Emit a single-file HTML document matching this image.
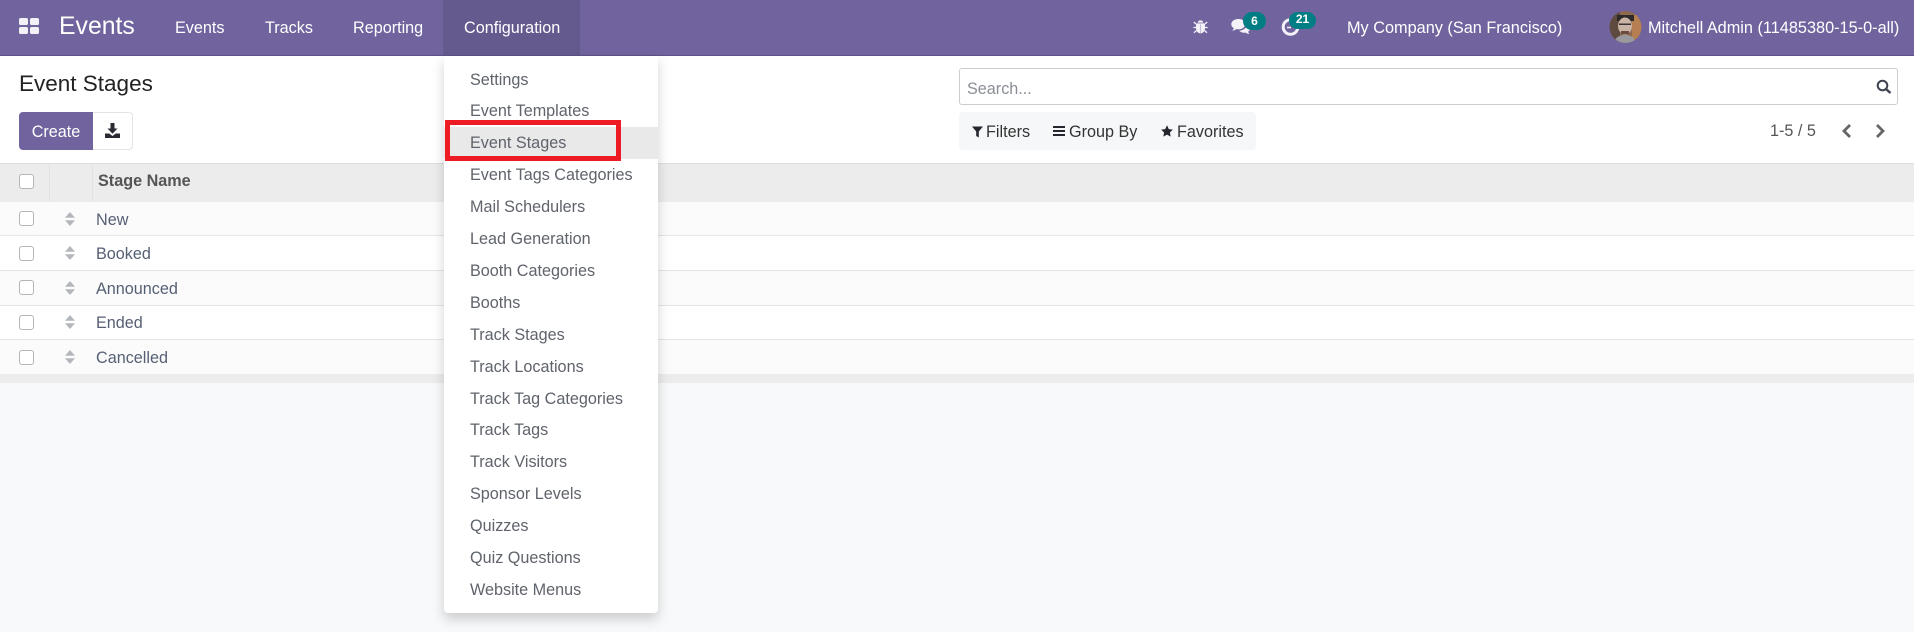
<!DOCTYPE html>
<html lang="en">
<head>
<meta charset="utf-8">
<title>Event Stages</title>
<style>
html,body{margin:0;padding:0;width:1914px;height:632px;overflow:hidden;background:#f8f9fa;font-family:"Liberation Sans",Arial,sans-serif;font-size:16.2px;color:#4c4c4c}
div,span,svg{position:absolute}
.t{white-space:nowrap;line-height:20px;height:20px}
.n{color:#fff;top:18px}
.cb{left:19px;width:13px;height:13px;background:#fff;border:1px solid #b5b5b5;border-radius:3px}
.row{left:0;width:1914px;border-bottom:1px solid #e6e6e6;box-sizing:border-box}
.m{left:470px;color:#5f636b}
.rt{left:96px;color:#566074}
.s{left:65px;width:10px;height:14px}
</style>
</head>
<body>
<!-- navbar -->
<div style="left:0;top:0;width:1914px;height:56px;background:#71639e;border-bottom:1px solid #5d5185;box-sizing:border-box"></div>
<div style="left:443px;top:0;width:137px;height:55px;background:#655a8e"></div>
<svg style="left:19px;top:18px" width="20" height="16" viewBox="0 0 20 16"><rect x="0" y="0" width="9" height="7" rx="1.8" fill="#f3f1f7"/><rect x="11" y="0" width="9" height="7" rx="1.8" fill="#f3f1f7"/><rect x="0" y="9" width="9" height="7" rx="1.8" fill="#f3f1f7"/><rect x="11" y="9" width="9" height="7" rx="1.8" fill="#f3f1f7"/></svg>
<div class="t" style="left:59px;top:17px;color:#fff;font-size:24.8px">Events</div>
<div class="t n" style="left:175px">Events</div>
<div class="t n" style="left:265px">Tracks</div>
<div class="t n" style="left:353px">Reporting</div>
<div class="t n" style="left:464px">Configuration</div>

<!-- bug -->
<svg style="left:1193px;top:19px" width="15" height="15" viewBox="0 0 15 15"><path d="M4.600 3.600a3 3 0 0 1 5.800 0z" fill="#f4f2f8"/><path d="M4 4.400h7c.6 0 1 .4 1 1V9c0 3-2 5.400-4.500 5.400S3 12 3 9V5.400c0-.6.4-1 1-1z" fill="#f4f2f8"/><path d="M3 5L.8 3M12 5l2.200-2M3 8.500H.4M12 8.500h2.600M3.500 11.500L1 13.700M11.500 11.500l2.500 2.200" stroke="#f4f2f8" stroke-width="1.300" fill="none"/><path d="M7.500 5.500v8.500" stroke="#b9b2d0" stroke-width=".9"/></svg>
<!-- chat -->
<svg style="left:1231px;top:18px" width="20" height="17" viewBox="0 0 20 17"><path d="M7.500 1C3.400 1 .3 3.300.3 6.200c0 1.700 1 3.100 2.500 4-.2.9-.8 1.700-1.500 2.500 1.500-.1 2.900-.7 4-1.600.6.100 1.200.2 1.800.2 4 0 7.100-2.300 7.100-5.100S11.500 1 7.500 1z" fill="#f4f2f8"/><path d="M15.800 6.500c0 3.300-3.300 6-7.600 6.200 1.200 1.300 3.100 2 5 2 .5 0 1 0 1.500-.1.900.8 2.200 1.300 3.800 1.400-.7-.7-1.200-1.400-1.400-2.200 1.200-.8 2-2 2-3.300 0-1.700-1.400-3.200-3.300-3.900z" fill="#f4f2f8"/></svg>
<div style="left:1243px;top:12px;width:23px;height:18px;background:#017e84;border-radius:9px;color:#fff;font-size:12px;font-weight:bold;line-height:18px;text-align:center">6</div>
<!-- clock -->
<svg style="left:1281px;top:18px" width="20" height="18" viewBox="0 0 20 18"><circle cx="9.500" cy="9" r="7.300" fill="none" stroke="#f4f2f8" stroke-width="3"/><path d="M6 9.500h4" stroke="#f4f2f8" stroke-width="1.500"/></svg>
<div style="left:1289px;top:12px;width:27px;height:17px;background:#017e84;border-radius:9px;color:#fff;font-size:12px;font-weight:bold;line-height:15px;text-align:center">21</div>

<div class="t n" style="left:1347px;font-size:16.3px">My Company (San Francisco)</div>
<!-- avatar -->
<svg style="left:1609px;top:11px" width="33" height="32" viewBox="0 0 33 32"><defs><clipPath id="c"><circle cx="16.500" cy="16" r="16"/></clipPath></defs><g clip-path="url(#c)"><rect width="33" height="32" fill="#8d6a4f"/><rect x="0" y="0" width="11" height="32" fill="#5e4a3f"/><rect x="23" y="4" width="10" height="24" fill="#b67f52"/><path d="M8 4h17v6H8z" fill="#2e2a2a"/><ellipse cx="16" cy="15" rx="7" ry="8.500" fill="#c9b3a4"/><path d="M10 12.500h12v1.500H10z" fill="#3b3535"/><path d="M12 20h8v3h-8z" fill="#6a4c40"/><path d="M5 32c1-6 6-8 11-8s10 2 11 8z" fill="#9a9a9e"/></g></svg>
<div class="t n" style="left:1648px;font-size:16.3px">Mitchell Admin (11485380-15-0-all)</div>

<!-- control panel -->
<div style="left:0;top:56px;width:1914px;height:107px;background:#fff"></div>
<div class="t" style="left:19px;top:74px;color:#222;font-size:22.5px;line-height:20px">Event Stages</div>
<div style="left:19px;top:112px;width:74px;height:38px;background:#71639e;border-radius:4px 0 0 4px;color:#fff;text-align:center;line-height:40px">Create</div>
<div style="left:93px;top:112px;width:40px;height:38px;background:#fff;border:1px solid #e4e4e4;border-left:0;border-radius:0 4px 4px 0;box-sizing:border-box"></div>
<svg style="left:105px;top:123px" width="15" height="15" viewBox="0 0 15 15"><path d="M5.500 0h4v5.500h3L7.500 10.700 2.500 5.500h3z" fill="#2b2b33"/><path d="M0 10.500h4.300l3.200 2.500 3.200-2.500H15V15H0z" fill="#2b2b33"/></svg>

<div style="left:959px;top:68px;width:939px;height:37px;background:#fff;border:1px solid #cdcdcd;border-radius:3px;box-sizing:border-box"></div>
<div class="t" style="left:967px;top:79px;color:#8a8e96">Search...</div>
<svg style="left:1876px;top:79px" width="16" height="15" viewBox="0 0 16 15"><circle cx="6.500" cy="6.500" r="4.800" fill="none" stroke="#3f4450" stroke-width="2"/><path d="M10 10l4.500 4" stroke="#3f4450" stroke-width="2.400"/></svg>

<div style="left:959px;top:112px;width:297px;height:38px;background:#f6f7f9;border-radius:4px"></div>
<svg style="left:972px;top:126px" width="11" height="12" viewBox="0 0 11 12"><path d="M0 .5h11L6.800 5.500V11.500L4.200 10V5.500z" fill="#26262e"/></svg>
<div class="t" style="left:986px;top:122px;color:#333">Filters</div>
<svg style="left:1053px;top:126px" width="12" height="10" viewBox="0 0 12 10"><path d="M0 0h12v2H0zM0 4h12v2H0zM0 8h12v2H0z" fill="#26262e"/></svg>
<div class="t" style="left:1069px;top:122px;color:#333">Group By</div>
<svg style="left:1161px;top:125px" width="12" height="12" viewBox="0 0 12 12"><path d="M6 .3l1.800 3.800 4.100.5-3 2.900.8 4.100L6 9.600 2.300 11.600l.8-4.100-3-2.900 4.100-.5z" fill="#26262e"/></svg>
<div class="t" style="left:1177px;top:122px;color:#333">Favorites</div>

<div class="t" style="left:1770px;top:121px;color:#555">1-5 / 5</div>
<svg style="left:1841px;top:124px" width="11" height="14" viewBox="0 0 11 14"><path d="M9 1L3 7l6 6" fill="none" stroke="#666" stroke-width="2.800"/></svg>
<svg style="left:1875px;top:124px" width="11" height="14" viewBox="0 0 11 14"><path d="M2 1l6 6-6 6" fill="none" stroke="#666" stroke-width="2.800"/></svg>

<!-- table -->
<div style="left:0;top:163px;width:1914px;height:39px;background:#ececec;border-top:1px solid #dedede;box-sizing:border-box"></div>
<div style="left:49px;top:164px;width:1px;height:37px;background:#e2e2e2"></div>
<div style="left:92px;top:164px;width:1px;height:37px;background:#e2e2e2"></div>
<div class="cb" style="top:174px"></div>
<div class="t" style="left:98px;top:171px;font-weight:bold;color:#555">Stage Name</div>

<div class="row" style="top:202px;height:34px;background:#fbfbfb"></div>
<div class="row" style="top:236px;height:35px;background:#fff"></div>
<div class="row" style="top:271px;height:35px;background:#fbfbfb"></div>
<div class="row" style="top:306px;height:34px;background:#fff"></div>
<div class="row" style="top:340px;height:34px;background:#fbfbfb;border-bottom:0"></div>
<div style="left:0;top:374px;width:1914px;height:9px;background:#ececec"></div>

<div class="cb" style="top:211px"></div>
<div class="cb" style="top:246px"></div>
<div class="cb" style="top:280px"></div>
<div class="cb" style="top:315px"></div>
<div class="cb" style="top:350px"></div>
<svg class="s" style="top:212px" viewBox="0 0 10 14"><path d="M5 0l5 5.800H0zM0 8.200h10L5 14z" fill="#b3b7bc"/></svg>
<svg class="s" style="top:246px" viewBox="0 0 10 14"><path d="M5 0l5 5.800H0zM0 8.200h10L5 14z" fill="#b3b7bc"/></svg>
<svg class="s" style="top:281px" viewBox="0 0 10 14"><path d="M5 0l5 5.800H0zM0 8.200h10L5 14z" fill="#b3b7bc"/></svg>
<svg class="s" style="top:315px" viewBox="0 0 10 14"><path d="M5 0l5 5.800H0zM0 8.200h10L5 14z" fill="#b3b7bc"/></svg>
<svg class="s" style="top:350px" viewBox="0 0 10 14"><path d="M5 0l5 5.800H0zM0 8.200h10L5 14z" fill="#b3b7bc"/></svg>
<div class="t rt" style="top:210px">New</div>
<div class="t rt" style="top:244px">Booked</div>
<div class="t rt" style="top:279px">Announced</div>
<div class="t rt" style="top:313px">Ended</div>
<div class="t rt" style="top:348px">Cancelled</div>

<!-- dropdown -->
<div style="left:444px;top:56px;width:214px;height:557px;background:#fff;border-radius:0 0 4px 4px;box-shadow:0 6px 12px rgba(0,0,0,.18)"></div>
<div style="left:444px;top:127px;width:214px;height:32px;background:#e9e9e9"></div>
<div class="t m" style="top:70px">Settings</div>
<div class="t m" style="top:101px">Event Templates</div>
<div class="t m" style="top:133px">Event Stages</div>
<div class="t m" style="top:165px">Event Tags Categories</div>
<div class="t m" style="top:197px">Mail Schedulers</div>
<div class="t m" style="top:229px">Lead Generation</div>
<div class="t m" style="top:261px">Booth Categories</div>
<div class="t m" style="top:293px">Booths</div>
<div class="t m" style="top:325px">Track Stages</div>
<div class="t m" style="top:357px">Track Locations</div>
<div class="t m" style="top:389px">Track Tag Categories</div>
<div class="t m" style="top:420px">Track Tags</div>
<div class="t m" style="top:452px">Track Visitors</div>
<div class="t m" style="top:484px">Sponsor Levels</div>
<div class="t m" style="top:516px">Quizzes</div>
<div class="t m" style="top:548px">Quiz Questions</div>
<div class="t m" style="top:580px">Website Menus</div>
<div style="left:445px;top:120px;width:176px;height:41px;border:5px solid #ed1c24;box-sizing:border-box"></div>
</body>
</html>
